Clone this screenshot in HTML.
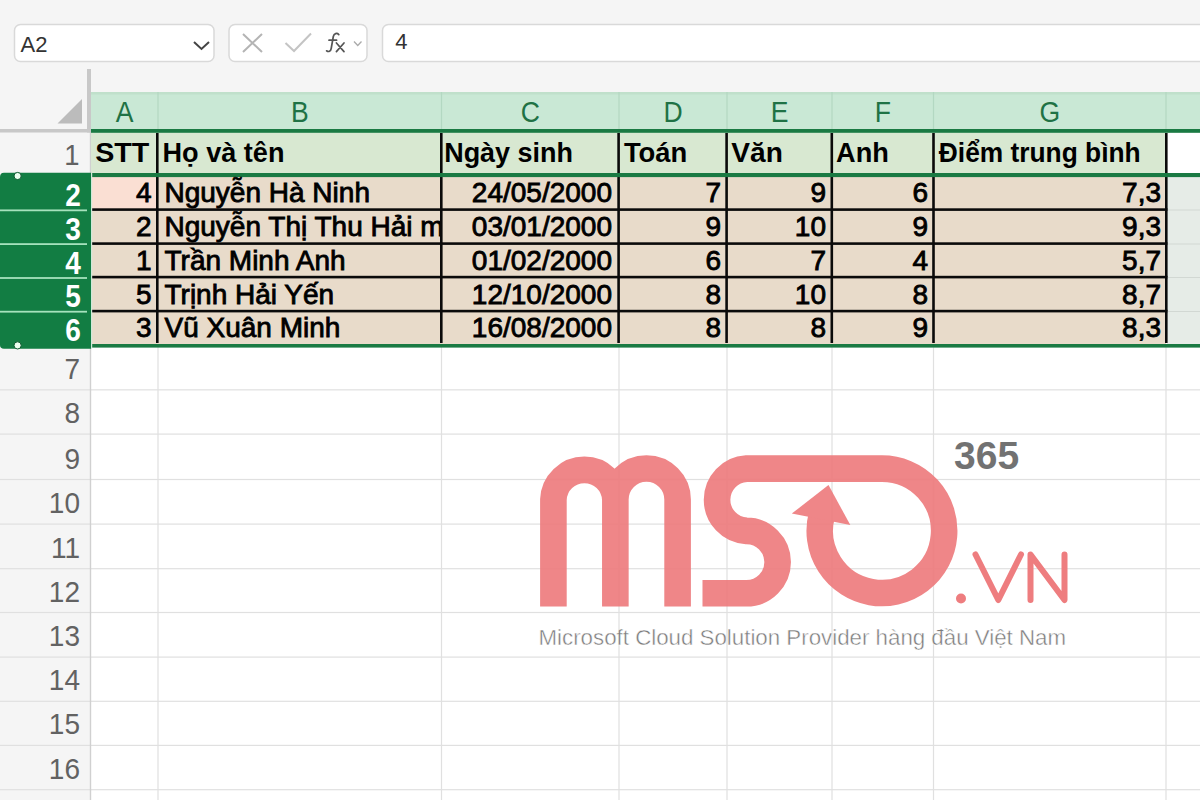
<!DOCTYPE html><html><head><meta charset="utf-8"><style>html,body{margin:0;padding:0;width:1200px;height:800px;overflow:hidden;background:#f5f5f5}svg{display:block}text{font-family:"Liberation Sans",sans-serif}</style></head><body>
<svg width="1200" height="800" viewBox="0 0 1200 800">
<rect x="0" y="0" width="1200" height="800" fill="#f5f5f5"/>
<rect x="14.5" y="24.5" width="199.5" height="37" rx="6" fill="#fff" stroke="#d9d9d9" stroke-width="1.5"/>
<text x="20.5" y="52" font-size="22" fill="#333">A2</text>
<polyline points="194,42 201.5,49 209,42" fill="none" stroke="#444" stroke-width="2"/>
<rect x="229" y="24.5" width="138" height="37" rx="6" fill="#fff" stroke="#d9d9d9" stroke-width="1.5"/>
<path d="M243,34 L262,52 M262,34 L243,52" stroke="#b4b4b4" stroke-width="2" fill="none"/>
<polyline points="285.5,43 294,51 311,33.5" fill="none" stroke="#c4c4c4" stroke-width="2"/>
<path d="M338.8,34.6 C337,32.6 334,33.2 333.3,36.5 L331.2,48.5 C330.7,51.5 328.5,52.2 326.6,50.8 M329,40.2 L336.6,40.2 M336.4,43 L344,51.6 M344,43 L336.4,51.6" fill="none" stroke="#555" stroke-width="1.7" stroke-linecap="round"/>
<polyline points="354,41.5 357.75,45.5 361.5,41.5" fill="none" stroke="#aaa" stroke-width="1.3"/>
<rect x="382.5" y="24.5" width="830" height="37" rx="6" fill="#fff" stroke="#d9d9d9" stroke-width="1.5"/>
<text x="395.3" y="49.2" font-size="22" fill="#333">4</text>
<rect x="91" y="132.5" width="1109" height="668" fill="#fff"/>
<rect x="0" y="132.5" width="90" height="668" fill="#f5f5f5"/>
<rect x="0" y="389.25" width="1200" height="1.2" fill="#e0e0e0"/>
<rect x="0" y="433.50" width="1200" height="1.2" fill="#e0e0e0"/>
<rect x="0" y="478.90" width="1200" height="1.2" fill="#e0e0e0"/>
<rect x="0" y="523.50" width="1200" height="1.2" fill="#e0e0e0"/>
<rect x="0" y="568.10" width="1200" height="1.2" fill="#e0e0e0"/>
<rect x="0" y="611.90" width="1200" height="1.2" fill="#e0e0e0"/>
<rect x="0" y="656.50" width="1200" height="1.2" fill="#e0e0e0"/>
<rect x="0" y="700.70" width="1200" height="1.2" fill="#e0e0e0"/>
<rect x="0" y="744.80" width="1200" height="1.2" fill="#e0e0e0"/>
<rect x="0" y="789.10" width="1200" height="1.2" fill="#e0e0e0"/>
<rect x="157.40" y="347" width="1.2" height="453" fill="#e0e0e0"/>
<rect x="440.90" y="347" width="1.2" height="453" fill="#e0e0e0"/>
<rect x="618.40" y="347" width="1.2" height="453" fill="#e0e0e0"/>
<rect x="726.40" y="347" width="1.2" height="453" fill="#e0e0e0"/>
<rect x="831.40" y="347" width="1.2" height="453" fill="#e0e0e0"/>
<rect x="932.90" y="347" width="1.2" height="453" fill="#e0e0e0"/>
<rect x="1165.40" y="347" width="1.2" height="453" fill="#e0e0e0"/>
<rect x="89.8" y="132" width="1.4" height="668" fill="#d0d0d0"/>
<rect x="91" y="92" width="1109" height="37.5" fill="#c9e8d5"/>
<rect x="91" y="92" width="1109" height="2.5" fill="#c0e0cb"/>
<rect x="157.40" y="92" width="1.2" height="37.5" fill="#b3d8c2"/>
<rect x="440.90" y="92" width="1.2" height="37.5" fill="#b3d8c2"/>
<rect x="618.40" y="92" width="1.2" height="37.5" fill="#b3d8c2"/>
<rect x="726.40" y="92" width="1.2" height="37.5" fill="#b3d8c2"/>
<rect x="831.40" y="92" width="1.2" height="37.5" fill="#b3d8c2"/>
<rect x="932.90" y="92" width="1.2" height="37.5" fill="#b3d8c2"/>
<rect x="1165.40" y="92" width="1.2" height="37.5" fill="#b3d8c2"/>
<text transform="translate(124.50,122.3) scale(0.9,1)" x="0" y="0" font-size="29.5" fill="#1f7245" text-anchor="middle">A</text>
<text transform="translate(299.75,122.3) scale(0.9,1)" x="0" y="0" font-size="29.5" fill="#1f7245" text-anchor="middle">B</text>
<text transform="translate(530.25,122.3) scale(0.9,1)" x="0" y="0" font-size="29.5" fill="#1f7245" text-anchor="middle">C</text>
<text transform="translate(673.00,122.3) scale(0.9,1)" x="0" y="0" font-size="29.5" fill="#1f7245" text-anchor="middle">D</text>
<text transform="translate(779.50,122.3) scale(0.9,1)" x="0" y="0" font-size="29.5" fill="#1f7245" text-anchor="middle">E</text>
<text transform="translate(882.75,122.3) scale(0.9,1)" x="0" y="0" font-size="29.5" fill="#1f7245" text-anchor="middle">F</text>
<text transform="translate(1049.75,122.3) scale(0.9,1)" x="0" y="0" font-size="29.5" fill="#1f7245" text-anchor="middle">G</text>
<text transform="translate(1223.00,122.3) scale(0.9,1)" x="0" y="0" font-size="29.5" fill="#1f7245" text-anchor="middle">H</text>
<rect x="87" y="69" width="4" height="63.5" fill="#c8c8c8"/>
<rect x="0" y="129" width="91" height="3.5" fill="#c8c8c8"/>
<polygon points="82,99 82,123.5 57.5,123.5" fill="#bcbcbc"/>
<rect x="91" y="132.5" width="1075" height="41" fill="#d8e8d1"/>
<text transform="translate(79.5,165) scale(0.93,1)" font-size="29.5" fill="#626262" text-anchor="end">1</text>
<text x="95.25" y="162" font-size="28" font-weight="bold" fill="#000" textLength="54.1" lengthAdjust="spacingAndGlyphs">STT</text>
<text x="162.5" y="162" font-size="28" font-weight="bold" fill="#000" textLength="122" lengthAdjust="spacingAndGlyphs">Họ và tên</text>
<text x="444.2" y="162" font-size="28" font-weight="bold" fill="#000" textLength="128.8" lengthAdjust="spacingAndGlyphs">Ngày sinh</text>
<text x="623.9" y="162" font-size="28" font-weight="bold" fill="#000" textLength="63.4" lengthAdjust="spacingAndGlyphs">Toán</text>
<text x="731.3" y="162" font-size="28" font-weight="bold" fill="#000" textLength="51.5" lengthAdjust="spacingAndGlyphs">Văn</text>
<text x="836.1" y="162" font-size="28" font-weight="bold" fill="#000" textLength="52.8" lengthAdjust="spacingAndGlyphs">Anh</text>
<text x="938.8" y="162" font-size="28" font-weight="bold" fill="#000" textLength="201.9" lengthAdjust="spacingAndGlyphs">Điểm trung bình</text>
<rect x="92" y="176.5" width="1074" height="167.5" fill="#e8dbca"/>
<rect x="1167" y="176.5" width="33" height="167.5" fill="#e6ece7"/>
<rect x="92" y="176.5" width="64" height="32.5" fill="#fadfd3"/>
<rect x="92" y="208.3" width="1075.5" height="2.6" fill="#0a0a0a"/>
<rect x="92" y="242.3" width="1075.5" height="2.6" fill="#0a0a0a"/>
<rect x="92" y="275.8" width="1075.5" height="2.6" fill="#0a0a0a"/>
<rect x="92" y="309.8" width="1075.5" height="2.6" fill="#0a0a0a"/>
<rect x="1167.5" y="209.5" width="33" height="1" fill="#d2d8d3"/>
<rect x="1167.5" y="243.5" width="33" height="1" fill="#d2d8d3"/>
<rect x="1167.5" y="277" width="33" height="1" fill="#d2d8d3"/>
<rect x="1167.5" y="311" width="33" height="1" fill="#d2d8d3"/>
<rect x="156" y="133" width="2.6" height="40" fill="#0a0a0a"/>
<rect x="156" y="177" width="2.6" height="166" fill="#0a0a0a"/>
<rect x="440" y="133" width="2.6" height="40" fill="#0a0a0a"/>
<rect x="440" y="177" width="2.6" height="166" fill="#0a0a0a"/>
<rect x="617.3" y="133" width="2.6" height="40" fill="#0a0a0a"/>
<rect x="617.3" y="177" width="2.6" height="166" fill="#0a0a0a"/>
<rect x="725.3" y="133" width="2.6" height="40" fill="#0a0a0a"/>
<rect x="725.3" y="177" width="2.6" height="166" fill="#0a0a0a"/>
<rect x="830.5" y="133" width="2.6" height="40" fill="#0a0a0a"/>
<rect x="830.5" y="177" width="2.6" height="166" fill="#0a0a0a"/>
<rect x="932.2" y="133" width="2.6" height="40" fill="#0a0a0a"/>
<rect x="932.2" y="177" width="2.6" height="166" fill="#0a0a0a"/>
<rect x="1165" y="133" width="2.6" height="40" fill="#0a0a0a"/>
<rect x="1165" y="177" width="2.6" height="166" fill="#0a0a0a"/>
<rect x="91" y="129" width="1109" height="3.8" fill="#1a7a43"/>
<rect x="91" y="173" width="1109" height="4.1" fill="#1a7a43"/>
<rect x="91" y="344" width="1109" height="3.6" fill="#1a7a43"/>
<path d="M0,177 Q0,172.75 4,172.75 L91,172.75 L91,348.75 L4,348.75 Q0,348.75 0,345 Z" fill="#127d43"/>
<rect x="0" y="209.45" width="87" height="1.8" fill="#a6e2bd"/>
<rect x="0" y="243.20" width="87" height="1.8" fill="#a6e2bd"/>
<rect x="0" y="277.10" width="87" height="1.8" fill="#a6e2bd"/>
<rect x="0" y="310.80" width="87" height="1.8" fill="#a6e2bd"/>
<rect x="91" y="172.75" width="1.2" height="176" fill="#cfe9d9"/>
<text transform="translate(80.8,205.6) scale(0.92,1)" font-size="30.5" font-weight="bold" fill="#fff" text-anchor="end">2</text>
<text transform="translate(80.8,239.5) scale(0.92,1)" font-size="30.5" font-weight="bold" fill="#fff" text-anchor="end">3</text>
<text transform="translate(80.8,273.5) scale(0.92,1)" font-size="30.5" font-weight="bold" fill="#fff" text-anchor="end">4</text>
<text transform="translate(80.8,307.3) scale(0.92,1)" font-size="30.5" font-weight="bold" fill="#fff" text-anchor="end">5</text>
<text transform="translate(80.8,341) scale(0.92,1)" font-size="30.5" font-weight="bold" fill="#fff" text-anchor="end">6</text>
<circle cx="17.6" cy="176" r="3.6" fill="#eaffef" stroke="#0d5a30" stroke-width="1"/>
<circle cx="17.6" cy="345.4" r="3.6" fill="#eaffef" stroke="#0d5a30" stroke-width="1"/>
<clipPath id="cb"><rect x="158" y="170" width="282" height="180"/></clipPath>
<text x="151.5" y="201.7" font-size="28" fill="#000" stroke="#000" stroke-width="0.85" text-anchor="end">4</text>
<text x="164.5" y="201.7" font-size="28" fill="#000" stroke="#000" stroke-width="0.85" clip-path="url(#cb)">Nguyễn Hà Ninh</text>
<text x="612" y="201.7" font-size="28" fill="#000" stroke="#000" stroke-width="0.85" text-anchor="end">24/05/2000</text>
<text x="721" y="201.7" font-size="28" fill="#000" stroke="#000" stroke-width="0.85" text-anchor="end">7</text>
<text x="826" y="201.7" font-size="28" fill="#000" stroke="#000" stroke-width="0.85" text-anchor="end">9</text>
<text x="928" y="201.7" font-size="28" fill="#000" stroke="#000" stroke-width="0.85" text-anchor="end">6</text>
<text x="1161" y="201.7" font-size="28" fill="#000" stroke="#000" stroke-width="0.85" text-anchor="end">7,3</text>
<text x="151.5" y="236" font-size="28" fill="#000" stroke="#000" stroke-width="0.85" text-anchor="end">2</text>
<text x="164.5" y="236" font-size="28" fill="#000" stroke="#000" stroke-width="0.85" clip-path="url(#cb)">Nguyễn Thị Thu Hải m</text>
<text x="612" y="236" font-size="28" fill="#000" stroke="#000" stroke-width="0.85" text-anchor="end">03/01/2000</text>
<text x="721" y="236" font-size="28" fill="#000" stroke="#000" stroke-width="0.85" text-anchor="end">9</text>
<text x="826" y="236" font-size="28" fill="#000" stroke="#000" stroke-width="0.85" text-anchor="end">10</text>
<text x="928" y="236" font-size="28" fill="#000" stroke="#000" stroke-width="0.85" text-anchor="end">9</text>
<text x="1161" y="236" font-size="28" fill="#000" stroke="#000" stroke-width="0.85" text-anchor="end">9,3</text>
<text x="151.5" y="270" font-size="28" fill="#000" stroke="#000" stroke-width="0.85" text-anchor="end">1</text>
<text x="164.5" y="270" font-size="28" fill="#000" stroke="#000" stroke-width="0.85" clip-path="url(#cb)">Trần Minh Anh</text>
<text x="612" y="270" font-size="28" fill="#000" stroke="#000" stroke-width="0.85" text-anchor="end">01/02/2000</text>
<text x="721" y="270" font-size="28" fill="#000" stroke="#000" stroke-width="0.85" text-anchor="end">6</text>
<text x="826" y="270" font-size="28" fill="#000" stroke="#000" stroke-width="0.85" text-anchor="end">7</text>
<text x="928" y="270" font-size="28" fill="#000" stroke="#000" stroke-width="0.85" text-anchor="end">4</text>
<text x="1161" y="270" font-size="28" fill="#000" stroke="#000" stroke-width="0.85" text-anchor="end">5,7</text>
<text x="151.5" y="304" font-size="28" fill="#000" stroke="#000" stroke-width="0.85" text-anchor="end">5</text>
<text x="164.5" y="304" font-size="28" fill="#000" stroke="#000" stroke-width="0.85" clip-path="url(#cb)">Trịnh Hải Yến</text>
<text x="612" y="304" font-size="28" fill="#000" stroke="#000" stroke-width="0.85" text-anchor="end">12/10/2000</text>
<text x="721" y="304" font-size="28" fill="#000" stroke="#000" stroke-width="0.85" text-anchor="end">8</text>
<text x="826" y="304" font-size="28" fill="#000" stroke="#000" stroke-width="0.85" text-anchor="end">10</text>
<text x="928" y="304" font-size="28" fill="#000" stroke="#000" stroke-width="0.85" text-anchor="end">8</text>
<text x="1161" y="304" font-size="28" fill="#000" stroke="#000" stroke-width="0.85" text-anchor="end">8,7</text>
<text x="151.5" y="337.3" font-size="28" fill="#000" stroke="#000" stroke-width="0.85" text-anchor="end">3</text>
<text x="164.5" y="337.3" font-size="28" fill="#000" stroke="#000" stroke-width="0.85" clip-path="url(#cb)">Vũ Xuân Minh</text>
<text x="612" y="337.3" font-size="28" fill="#000" stroke="#000" stroke-width="0.85" text-anchor="end">16/08/2000</text>
<text x="721" y="337.3" font-size="28" fill="#000" stroke="#000" stroke-width="0.85" text-anchor="end">8</text>
<text x="826" y="337.3" font-size="28" fill="#000" stroke="#000" stroke-width="0.85" text-anchor="end">8</text>
<text x="928" y="337.3" font-size="28" fill="#000" stroke="#000" stroke-width="0.85" text-anchor="end">9</text>
<text x="1161" y="337.3" font-size="28" fill="#000" stroke="#000" stroke-width="0.85" text-anchor="end">8,3</text>
<text transform="translate(80,378.85) scale(0.95,1)" font-size="29.5" fill="#626262" text-anchor="end">7</text>
<text transform="translate(80,423.10) scale(0.95,1)" font-size="29.5" fill="#626262" text-anchor="end">8</text>
<text transform="translate(80,468.50) scale(0.95,1)" font-size="29.5" fill="#626262" text-anchor="end">9</text>
<text transform="translate(80,513.10) scale(0.95,1)" font-size="29.5" fill="#626262" text-anchor="end">10</text>
<text transform="translate(80,557.70) scale(0.95,1)" font-size="29.5" fill="#626262" text-anchor="end">11</text>
<text transform="translate(80,601.50) scale(0.95,1)" font-size="29.5" fill="#626262" text-anchor="end">12</text>
<text transform="translate(80,646.10) scale(0.95,1)" font-size="29.5" fill="#626262" text-anchor="end">13</text>
<text transform="translate(80,690.30) scale(0.95,1)" font-size="29.5" fill="#626262" text-anchor="end">14</text>
<text transform="translate(80,734.40) scale(0.95,1)" font-size="29.5" fill="#626262" text-anchor="end">15</text>
<text transform="translate(80,778.70) scale(0.95,1)" font-size="29.5" fill="#626262" text-anchor="end">16</text>
<g opacity="0.93">
<g fill="none" stroke="#ee7d7f" stroke-width="26.6">
<path d="M553.4,606.5 L553.4,499.6 A31,31 0 0 1 615.35,499.6 L615.35,606.5 M615.35,499.6 A31,31 0 0 1 677.6,499.6 L677.6,606.5"/>
<path d="M702.5,593.3 L746.5,593.3 A31.2,31.2 0 0 0 746.5,530.9 A31.2,31.2 0 0 1 746.5,468.6 L882,468.6 A62.2,62.2 0 1 1 821.9,514.6"/>
</g>
<polygon points="828.5,485 791.8,513.6 850.3,525" fill="#ee7d7f"/>
</g>
<circle cx="961" cy="598.5" r="5" fill="#ee7d7f"/>
<path d="M975.5,554.5 L998.3,600 L1021,554.5 M1030.5,600 L1030.5,554.5 L1064.5,600 L1064.5,554.5" fill="none" stroke="#ee7d7f" stroke-width="6" stroke-linecap="round" stroke-linejoin="round"/>
<text x="954" y="469" font-size="39" font-weight="bold" fill="#727272">365</text>
<text x="538.5" y="645" font-size="22.3" fill="#7c7c7c" stroke="#fff" stroke-width="0.45">Microsoft Cloud Solution Provider hàng đầu Việt Nam</text>
</svg></body></html>
